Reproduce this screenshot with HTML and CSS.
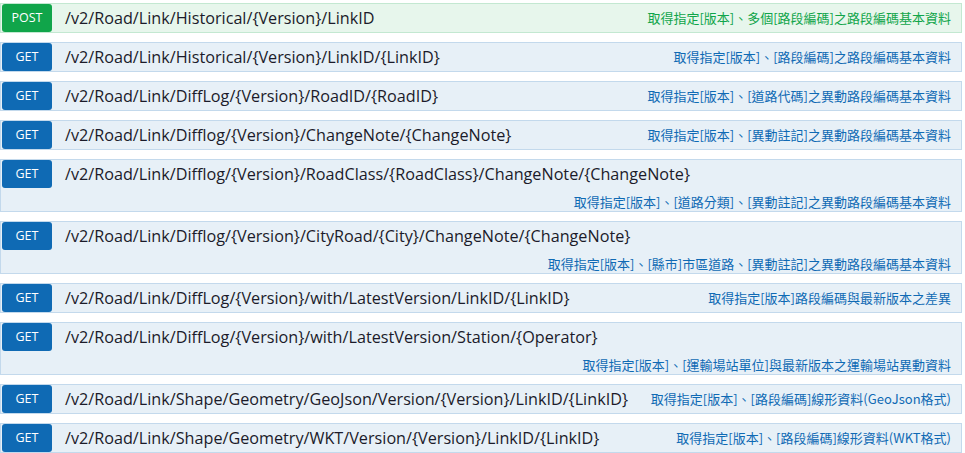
FILE: index.html
```html
<!DOCTYPE html>
<html lang="zh-Hant">
<head>
<meta charset="utf-8">
<title>Road Link API</title>
<link rel="stylesheet" href="styles.css">
</head>
<body>
<div class="ops">
  <div class="op post">
    <span class="method">POST</span>
    <span class="path">/v2/Road/Link/Historical/{Version}/LinkID</span>
    <span class="desc">取得指定[版本]、多個[路段編碼]之路段編碼基本資料</span>
  </div>
  <div class="op get">
    <span class="method">GET</span>
    <span class="path">/v2/Road/Link/Historical/{Version}/LinkID/{LinkID}</span>
    <span class="desc">取得指定[版本]、[路段編碼]之路段編碼基本資料</span>
  </div>
  <div class="op get">
    <span class="method">GET</span>
    <span class="path">/v2/Road/Link/DiffLog/{Version}/RoadID/{RoadID}</span>
    <span class="desc">取得指定[版本]、[道路代碼]之異動路段編碼基本資料</span>
  </div>
  <div class="op get">
    <span class="method">GET</span>
    <span class="path">/v2/Road/Link/Difflog/{Version}/ChangeNote/{ChangeNote}</span>
    <span class="desc">取得指定[版本]、[異動註記]之異動路段編碼基本資料</span>
  </div>
  <div class="op get">
    <span class="method">GET</span>
    <span class="path">/v2/Road/Link/Difflog/{Version}/RoadClass/{RoadClass}/ChangeNote/{ChangeNote}</span>
    <span class="desc">取得指定[版本]、[道路分類]、[異動註記]之異動路段編碼基本資料</span>
  </div>
  <div class="op get">
    <span class="method">GET</span>
    <span class="path">/v2/Road/Link/Difflog/{Version}/CityRoad/{City}/ChangeNote/{ChangeNote}</span>
    <span class="desc">取得指定[版本]、[縣市]市區道路、[異動註記]之異動路段編碼基本資料</span>
  </div>
  <div class="op get">
    <span class="method">GET</span>
    <span class="path">/v2/Road/Link/DiffLog/{Version}/with/LatestVersion/LinkID/{LinkID}</span>
    <span class="desc">取得指定[版本]路段編碼與最新版本之差異</span>
  </div>
  <div class="op get">
    <span class="method">GET</span>
    <span class="path">/v2/Road/Link/DiffLog/{Version}/with/LatestVersion/Station/{Operator}</span>
    <span class="desc">取得指定[版本]、[運輸場站單位]與最新版本之運輸場站異動資料</span>
  </div>
  <div class="op get">
    <span class="method">GET</span>
    <span class="path">/v2/Road/Link/Shape/Geometry/GeoJson/Version/{Version}/LinkID/{LinkID}</span>
    <span class="desc">取得指定[版本]、[路段編碼]線形資料(GeoJson格式)</span>
  </div>
  <div class="op get">
    <span class="method">GET</span>
    <span class="path">/v2/Road/Link/Shape/Geometry/WKT/Version/{Version}/LinkID/{LinkID}</span>
    <span class="desc">取得指定[版本]、[路段編碼]線形資料(WKT格式)</span>
  </div>
</div>
</body>
</html>
```
FILE: styles.css
```css
html, body {
  margin: 0;
  padding: 0;
  background: #fff;
}
body {
  padding-top: 3px;
  font-family: "Open Sans", "Noto Sans CJK TC", sans-serif;
}
.ops {
  width: 962px;
  display: flex;
  flex-direction: column;
  gap: 9px;
}
.op {
  box-sizing: border-box;
  display: flex;
  flex-wrap: wrap;
  align-items: center;
  row-gap: 5px;
  padding: 0 10px 0 1px;
  border: 1px solid #c3d9ec;
  background: #e7f0f7;
  min-height: 30px;
}
.op.post {
  border-color: #c3e8d1;
  background: #e7f6ec;
}
.method {
  box-sizing: border-box;
  width: 50px;
  height: 28px;
  line-height: 28px;
  text-align: center;
  color: #fff;
  font-size: 12.5px;
  border-radius: 3px;
  background: #0f6ab4;
}
.post .method {
  background: #10a54a;
}
.path {
  margin-left: 13px;
  font-size: 16.2px;
  color: #1b1b2a;
  white-space: nowrap;
}
.desc {
  margin-left: auto;
  padding-left: 10px;
  font-family: "Noto Sans CJK TC", sans-serif;
  font-size: 13px;
  line-height: 18px;
  color: #0f6ab4;
  white-space: nowrap;
}
.post .desc {
  color: #10a54a;
}
```
